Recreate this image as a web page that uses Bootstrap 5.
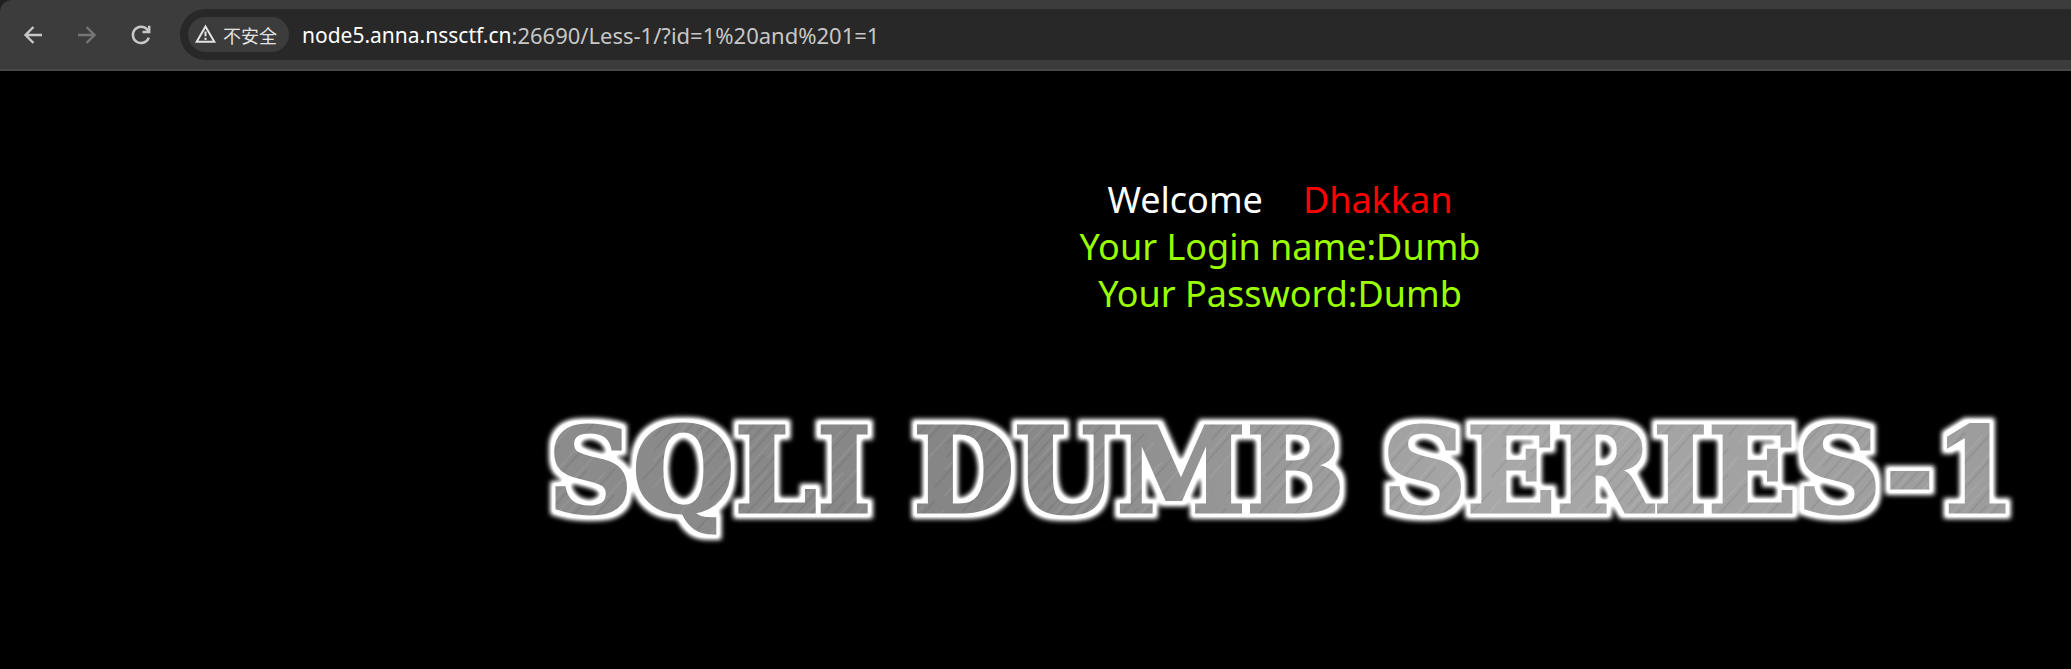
<!DOCTYPE html>
<html lang="en">
<head>
<meta charset="utf-8">
<meta name="viewport" content="width=device-width, initial-scale=1">
<title>Less-1</title>
<link href="https://cdn.jsdelivr.net/npm/bootstrap@5.3.0/dist/css/bootstrap.min.css" rel="stylesheet">
<style>
  body { background: #000; font-family: "Noto Sans", "Noto Sans CJK SC", sans-serif; overflow-x: hidden; }
  .window-top { background: #202020; }
  .toolbar { background: #3c3c3c; border-bottom: 2px solid #474747; border-top-left-radius: 12px; padding: 9px 0 9px 20px; }
  .tool-btn { width: 28px; height: 28px; padding: 0; border: 0; background: none; color: #c7c7c7; line-height: 1; }
  .tool-btn:disabled { color: #757575; }
  .tool-btn svg, .site-chip svg { display: block; }
  .tools { gap: 26px; margin-right: 24px; }
  .omnibox { background: #282828; height: 51px; border-radius: 26px 0 0 26px; padding-left: 8px; }
  .site-chip { background: #3c3c3c; color: #e3e3e3; height: 35px; border: 0; border-radius: 18px; padding: 0 12px 0 6px; gap: 6px; font: 18px/24px "Noto Sans CJK SC", sans-serif; }
  .url { line-height: 28px; }
  .url-host { font-size: 21px; color: #fff; margin-left: 13px; }
  .url-path { font-size: 22px; color: #c7c7c7; background: none; border: 0; padding: 0; outline: 0; min-width: 0; }
  .page { padding: 105px 0 0 489px; }
  .greeting { font-size: 36px; line-height: 47px; color: #9f0; }
  .greeting-top { gap: 40px; color: #fff; }
  .greeting-name { color: #f00; }
  .banner { margin-top: 84px; max-width: 1480px; }
  .banner text { font: bold 117px "DejaVu Serif", serif; }
</style>
</head>
<body>
<header class="window-top">
  <nav class="toolbar d-flex align-items-center" aria-label="Browser">
    <div class="tools d-flex align-items-center">
      <button class="tool-btn" type="button" aria-label="Back">
        <svg width="28" height="28" viewBox="0 0 28 28" fill="none" stroke="currentColor" stroke-width="2.4"><path d="M22 14H6M13.500 6 5.500 14l8 8"/></svg>
      </button>
      <button class="tool-btn" type="button" aria-label="Forward" disabled>
        <svg width="28" height="28" viewBox="0 0 28 28" fill="none" stroke="currentColor" stroke-width="2.4"><path d="M4 14h16M12.500 6l8 8-8 8"/></svg>
      </button>
      <button class="tool-btn" type="button" aria-label="Reload">
        <svg width="28" height="28" viewBox="0 0 28 28" fill="none" stroke="currentColor" stroke-width="2.5"><path d="M20.800 16.600A8.200 8.200 0 1 1 19.200 8.400L21 10.500M21.200 4.800V11H14.500"/></svg>
      </button>
    </div>
    <div class="omnibox flex-grow-1 d-flex align-items-center">
      <button class="site-chip d-flex align-items-center" type="button">
        <svg width="23" height="23" viewBox="0 0 23 23" fill="none" stroke="currentColor" stroke-width="2"><path d="M11.500 3.500 20.300 18.700H2.700Z"/><path d="M11.500 8.500v4.700M11.500 14.700v2.200"/></svg>
        <span>不安全</span>
      </button>
      <label class="url url-host" for="url">node5.anna.nssctf.cn</label>
      <input class="url url-path flex-grow-1" id="url" type="text" value=":26690/Less-1/?id=1%20and%201=1" spellcheck="false">
    </div>
  </nav>
</header>

<main class="page">
  <div class="greeting text-center">
    <div class="greeting-top d-flex justify-content-center"><span>Welcome</span><span class="greeting-name">Dhakkan</span></div>
    <div>Your Login name:Dumb</div>
    <div>Your Password:Dumb</div>
  </div>
  <svg class="banner d-block mx-auto w-100" viewBox="0 0 1480 150" role="img" aria-label="SQLI DUMB SERIES-1">
    <defs>
      <linearGradient id="steel" gradientUnits="userSpaceOnUse" x1="0" y1="0" x2="1480" y2="0">
        <stop offset="0" stop-color="#8c8c8c"/><stop offset=".3" stop-color="#858585"/>
        <stop offset=".52" stop-color="#9c9c9c"/><stop offset=".64" stop-color="#a8a8a8"/><stop offset="1" stop-color="#9c9c9c"/>
      </linearGradient>
      <filter id="plate" filterUnits="userSpaceOnUse" x="0" y="0" width="1480" height="150" color-interpolation-filters="sRGB">
        <feMorphology in="SourceAlpha" operator="dilate" radius="5" result="fat"/>
        <feGaussianBlur in="fat" stdDeviation="2.500" result="soft"/>
        <feComponentTransfer in="soft" result="halo">
          <feFuncR type="linear" slope="0" intercept="1"/><feFuncG type="linear" slope="0" intercept="1"/><feFuncB type="linear" slope="0" intercept="1"/>
          <feFuncA type="linear" slope="1.250"/>
        </feComponentTransfer>
        <feMerge><feMergeNode in="halo"/><feMergeNode in="SourceGraphic"/></feMerge>
      </filter>
      <pattern id="brushed" patternUnits="userSpaceOnUse" width="1480" height="150">
        <rect width="1480" height="150" fill="url(#steel)"/>
        <rect width="1480" height="150" fill="url(#scratches)"/>
      </pattern>
      <pattern id="scratches" patternUnits="userSpaceOnUse" width="37" height="190" patternTransform="rotate(42)">
        <path d="M3 0v90M14 40v120M22 10v70M31 90v90" stroke="#fff" stroke-opacity=".12"/>
        <path d="M7 20v130M18 80v100M27 0v110M35 60v80" stroke="#000" stroke-opacity=".12"/>
      </pattern>
    </defs>
    <g filter="url(#plate)" fill="url(#brushed)" stroke="url(#brushed)" stroke-width="3">
      <text x="8" y="111">SQLI</text>
      <text x="373" y="111">DUMB</text>
      <text x="842" y="111">SERIES-1</text>
    </g>
  </svg>
</main>
<script src="https://cdn.jsdelivr.net/npm/bootstrap@5.3.0/dist/js/bootstrap.bundle.min.js"></script>
</body>
</html>
